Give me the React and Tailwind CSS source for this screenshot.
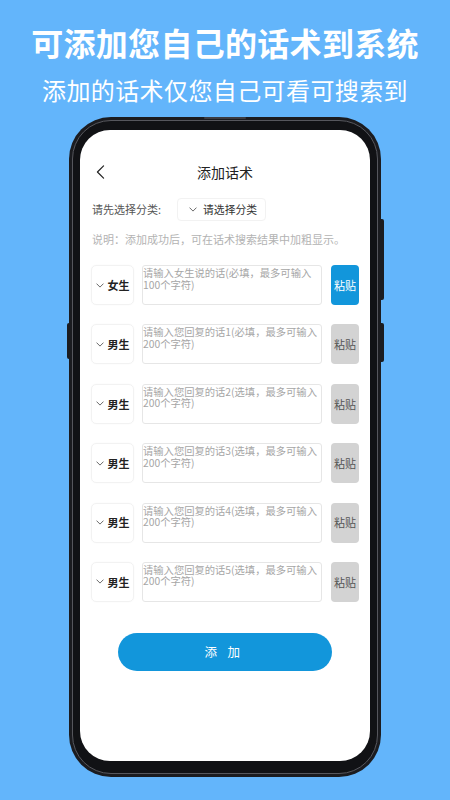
import React from "react";

const cjk = { fontFamily: '"Noto Sans CJK SC", "Noto Sans", sans-serif' };

function Chevron({ className = "" }) {
  return (
    <svg viewBox="0 0 10 6" className={className} fill="none" stroke="currentColor" strokeWidth="1.1">
      <path d="M1 1l4 4 4-4" strokeLinecap="round" strokeLinejoin="round" />
    </svg>
  );
}

function Row({ who, hint, active }) {
  return (
    <div className="flex h-[40px] items-stretch">
      <div className="flex w-[43px] shrink-0 items-center justify-center gap-[4px] rounded-[5px] border border-[#f2f2f2] shadow-[0_0_2px_rgba(0,0,0,0.03)]">
        <Chevron className="h-[5px] w-[8px] text-[#555]" />
        <span className="text-[11px] font-semibold text-[#222]">{who}</span>
      </div>
      <textarea
        className="ml-[8px] w-[180px] resize-none overflow-hidden rounded-[3px] border border-[#e6e6e6] px-0 py-[1px] text-[10.3px] leading-[11.5px] text-[#333] outline-none placeholder:text-[#a6a6a6]"
        placeholder={hint}
      />
      <button
        className={
          "ml-[9px] w-[28px] shrink-0 rounded-[4px] text-[11px] " +
          (active ? "bg-[#1296db] text-white" : "bg-[#d3d3d3] text-[#555]")
        }
      >
        粘贴
      </button>
    </div>
  );
}

export default function App() {
  const rows = [
    { who: "女生", hint: "请输入女生说的话(必填，最多可输入100个字符)", active: true },
    { who: "男生", hint: "请输入您回复的话1(必填，最多可输入200个字符)" },
    { who: "男生", hint: "请输入您回复的话2(选填，最多可输入200个字符)" },
    { who: "男生", hint: "请输入您回复的话3(选填，最多可输入200个字符)" },
    { who: "男生", hint: "请输入您回复的话4(选填，最多可输入200个字符)" },
    { who: "男生", hint: "请输入您回复的话5(选填，最多可输入200个字符)" },
  ];

  return (
    <div className="flex h-[800px] w-[450px] flex-col items-center overflow-hidden bg-[#63b5fb]" style={cjk}>
      <h1 className="pt-[26px] text-[32px] font-bold leading-[32px] tracking-[0.3px] text-white">
        可添加您自己的话术到系统
      </h1>
      <p className="mt-[19px] text-[24px] leading-[26px] tracking-[0.4px] text-white">添加的话术仅您自己可看可搜索到</p>

      <div className="relative mt-[14px] w-[312px] rounded-[42px] bg-[#1b1c20] p-[3px]">
        <div className="absolute left-1/2 top-0 h-[2px] w-[42px] -translate-x-1/2 rounded-full bg-[#3b3c42]" />
        <div className="absolute left-[-2px] top-[206px] h-[36px] w-[3px] rounded-l-[2px] bg-[#1b1c20]" />
        <div className="absolute right-[-3px] top-[102px] h-[81px] w-[3px] rounded-r-[2px] bg-[#1b1c20]" />
        <div className="absolute right-[-3px] top-[206px] h-[39px] w-[3px] rounded-r-[2px] bg-[#1b1c20]" />
        <div className="rounded-[39px] border border-[#56575d] bg-[#111215] px-[7px] pb-[12px] pt-[9px]">
          <div className="flex h-[631px] flex-col rounded-[30px] bg-white px-[11px]">
            <div className="relative mt-[30px] flex h-[24px] items-center justify-center">
              <svg viewBox="0 0 10 16" className="absolute left-[5px] h-[14px] w-[9px] text-[#222]" fill="none" stroke="currentColor" strokeWidth="1.4">
                <path d="M8.5 1L1.5 8l7 7" strokeLinecap="round" strokeLinejoin="round" />
              </svg>
              <span className="text-[14px] text-[#222]">添加话术</span>
            </div>

            <div className="mt-[14px] flex h-[23px] items-center pl-[1px]">
              <span className="text-[11px] text-[#555]">请先选择分类:</span>
              <div className="ml-[16px] flex h-[23px] w-[89px] items-center rounded-[4px] border border-[#f2f2f2] pl-[11px]">
                <Chevron className="h-[5px] w-[8px] text-[#555]" />
                <span className="ml-[6px] text-[10.8px] text-[#333]">请选择分类</span>
              </div>
            </div>

            <p className="mt-[10px] pl-[1px] text-[11px] leading-[16px] text-[#b3b3b3]">
              说明：添加成功后，可在话术搜索结果中加粗显示。
            </p>

            <div className="mt-[18px] flex flex-col gap-[19.4px]">
              {rows.map((r, i) => (
                <Row key={i} {...r} />
              ))}
            </div>

            <button className="mx-auto mt-[31px] h-[38px] w-[214px] rounded-full bg-[#1296db] pl-[5px] text-[12.5px] tracking-[10.5px] text-white">
              添加
            </button>
          </div>
        </div>
      </div>
    </div>
  );
}
